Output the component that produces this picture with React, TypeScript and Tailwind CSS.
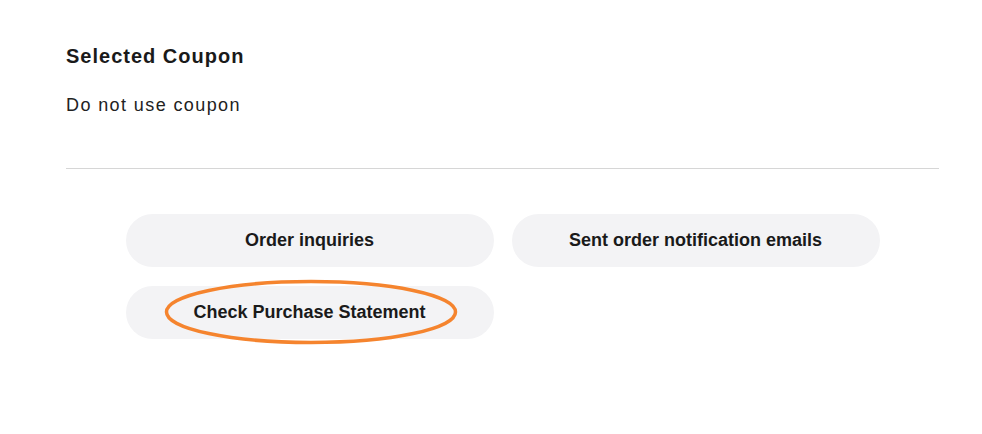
export default function App() {
  return (
    <main className="min-h-screen bg-white pl-[66px] pr-[43px] pt-[44px] font-['Liberation_Sans',Arial,sans-serif] text-[#1a1a1a]">
      <section>
        <h2 className="text-[20px] font-bold leading-6 tracking-[1px]">Selected Coupon</h2>
        <p className="mt-[25px] text-[18px] leading-6 tracking-[1.4px] text-[#222]">Do not use coupon</p>
      </section>

      <div className="mt-[51px] h-px w-full bg-[#d6d6d6]" />

      <div className="mx-auto mt-[45px] grid w-[754px] grid-cols-2 gap-x-[18px] gap-y-[19px]">
        <button className="h-[53px] rounded-full bg-[#f3f3f5] text-[18px] font-bold text-[#1a1a1a]">
          Order inquiries
        </button>
        <button className="h-[53px] rounded-full bg-[#f3f3f5] text-[18px] font-bold text-[#1a1a1a]">
          Sent order notification emails
        </button>
        <button className="relative h-[53px] rounded-full bg-[#f3f3f5] text-[18px] font-bold text-[#1a1a1a]">
          Check Purchase Statement
          <svg
            className="pointer-events-none absolute left-[38px] top-[-7px]"
            width="294"
            height="66"
            viewBox="0 0 294 66"
          >
            <ellipse cx="147" cy="33" rx="144.5" ry="30.5" fill="none" stroke="#f5842e" strokeWidth="3.5" />
          </svg>
        </button>
      </div>
    </main>
  );
}
